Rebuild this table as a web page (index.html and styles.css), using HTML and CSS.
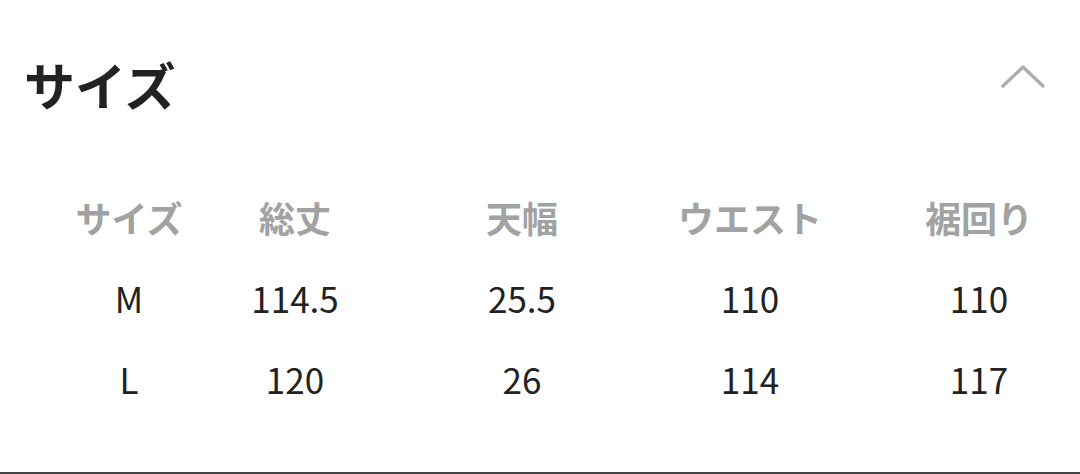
FILE: index.html
```html
<!DOCTYPE html>
<html lang="ja">
<head>
<meta charset="utf-8">
<title>サイズ</title>
<link rel="stylesheet" href="styles.css">
</head>
<body>
<section class="size-section">
  <header class="size-head">
    <h2 class="size-title">サイズ</h2>
    <svg class="chevron" width="44" height="26" viewBox="0 0 44 26" aria-hidden="true">
      <polyline points="2,22 22,3 42,22" fill="none" stroke="#adadad" stroke-width="3.4" stroke-linecap="round" stroke-linejoin="round"/>
    </svg>
  </header>
  <div class="size-table">
    <div class="cell th">サイズ</div>
    <div class="cell th">総丈</div>
    <div class="cell th">天幅</div>
    <div class="cell th">ウエスト</div>
    <div class="cell th">裾回り</div>

    <div class="cell td">M</div>
    <div class="cell td">114.5</div>
    <div class="cell td">25.5</div>
    <div class="cell td">110</div>
    <div class="cell td">110</div>

    <div class="cell td">L</div>
    <div class="cell td">120</div>
    <div class="cell td">26</div>
    <div class="cell td">114</div>
    <div class="cell td">117</div>
  </div>
</section>
</body>
</html>
```
FILE: styles.css
```css
html, body {
  margin: 0;
  padding: 0;
  background: #ffffff;
}
body {
  width: 1080px;
  height: 474px;
  overflow: hidden;
  font-family: "Noto Sans CJK JP", "Noto Sans", sans-serif;
}
.size-section {
  height: 474px;
  box-sizing: border-box;
  border-bottom: 2px solid #444444;
  display: flex;
  flex-direction: column;
}
.size-head {
  height: 176px;
  padding: 0 35px 0 24px;
  display: flex;
  align-items: center;
  justify-content: space-between;
}
.size-title {
  margin: -8px 0 0;
  font-size: 51px;
  line-height: 1;
  font-weight: 700;
  color: #222222;
}
.chevron {
  display: block;
  margin-top: -22px;
}
.size-table {
  margin-left: 90px;
  display: grid;
  grid-template-columns: 78px 254px 200px 256px 202px;
  grid-auto-rows: 81px;
}
.cell {
  display: flex;
  align-items: center;
  justify-content: center;
  white-space: nowrap;
  line-height: 1;
}
.th {
  font-size: 36px;
  font-weight: 700;
  color: #a2a2a2;
}
.td {
  font-size: 35px;
  font-weight: 400;
  color: #222222;
}
```
